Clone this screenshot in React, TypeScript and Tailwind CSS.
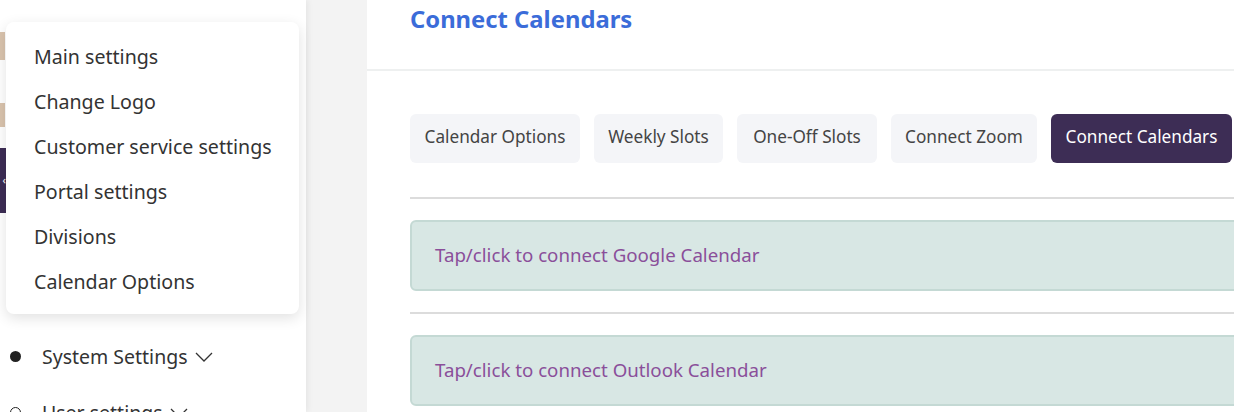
const menuItems = [
  "Main settings",
  "Change Logo",
  "Customer service settings",
  "Portal settings",
  "Divisions",
  "Calendar Options",
];

const tabs = [
  { label: "Calendar Options", w: "w-[170px]" },
  { label: "Weekly Slots", w: "w-[129px]" },
  { label: "One-Off Slots", w: "w-[140px]" },
  { label: "Connect Zoom", w: "w-[146px]" },
  { label: "Connect Calendars", w: "w-[181px]" },
];

const font = { fontFamily: '"Noto Sans", "Open Sans", sans-serif' };

const Chevron = () => (
  <svg width="18" height="10" viewBox="0 0 18 10" className="ml-[7px] mt-[1px]" fill="none">
    <polyline points="1,1 9,9 17,1" stroke="#333" strokeWidth="1.3" />
  </svg>
);

export default function App() {
  return (
    <div className="flex h-[412px] w-[1234px] overflow-hidden bg-[#f3f3f3]" style={font}>
      {/* sidebar */}
      <aside className="relative z-10 flex w-[306px] shrink-0 flex-col bg-white shadow-[2px_0_6px_rgba(0,0,0,0.06)]">
        <div className="mt-[32px] h-[28px] w-[5px] shrink-0 bg-[#d9c3ad]" />
        <div className="mt-[43px] h-[24px] w-[5px] shrink-0 bg-[#d9c3ad]" />
        <div className="mt-[21px] flex h-[65px] w-[6px] shrink-0 items-center justify-end bg-[#3d2d55] text-[11px] text-white">
          ‹
        </div>
        <div className="mt-[129px] flex shrink-0 items-center text-[19.5px] text-[#333]">
          <span className="ml-[10px] h-[11px] w-[11px] rounded-full bg-[#222]" />
          <span className="ml-[21px]">System Settings</span>
          <Chevron />
        </div>
        <div className="mt-[27px] flex shrink-0 items-center text-[19.5px] text-[#333]">
          <span className="ml-[10px] h-[11px] w-[11px] rounded-full border-[1.5px] border-[#222]" />
          <span className="ml-[21px]">User settings</span>
          <Chevron />
        </div>

        {/* open dropdown */}
        <div className="absolute left-[6px] top-[22px] flex h-[292px] w-[293px] flex-col rounded-lg bg-white pt-[12px] shadow-[0_4px_14px_rgba(0,0,0,0.12)]">
          {menuItems.map((item) => (
            <div key={item} className="flex h-[45px] shrink-0 items-center pl-[28px] text-[19.6px] text-[#333]">
              {item}
            </div>
          ))}
        </div>
      </aside>

      {/* gap strip */}
      <div className="w-[61px] shrink-0 bg-[#f3f3f3]" />

      {/* main */}
      <main className="min-w-0 flex-1 overflow-hidden bg-white">
        <div className="flex h-[71px] items-start border-b-2 border-[#eef0f0] pl-[43px] pt-[2px]">
          <h1 className="text-[23.8px] font-bold text-[#3b6cd9]">Connect Calendars</h1>
        </div>
        <div className="w-[1000px] pl-[43px] pt-[43px]">
          <div className="flex gap-[14px]">
            {tabs.map((tab, i) => (
              <button
                key={tab.label}
                className={
                  i === tabs.length - 1
                    ? `h-[49px] ${tab.w} shrink-0 whitespace-nowrap rounded-md bg-[#3d2d55] pb-[3px] text-[17.2px] text-white`
                    : `h-[49px] ${tab.w} shrink-0 whitespace-nowrap rounded-md bg-[#f4f5f8] pb-[3px] text-[17.2px] text-[#444]`
                }
              >
                {tab.label}
              </button>
            ))}
          </div>
          <div className="mt-[34px] h-[2px] w-[900px] bg-[#dcdcdc]" />
          <div className="mt-[21px] flex h-[71px] w-[900px] items-center rounded-md border-2 border-[#c4d9d4] bg-[#d8e7e4] pl-[23px] text-[18.7px] text-[#8a4f9a]">
            Tap/click to connect Google Calendar
          </div>
          <div className="mt-[21px] h-[2px] w-[900px] bg-[#dcdcdc]" />
          <div className="mt-[21px] flex h-[71px] w-[900px] items-center rounded-md border-2 border-[#c4d9d4] bg-[#d8e7e4] pl-[23px] text-[18.7px] text-[#8a4f9a]">
            Tap/click to connect Outlook Calendar
          </div>
        </div>
      </main>
    </div>
  );
}
